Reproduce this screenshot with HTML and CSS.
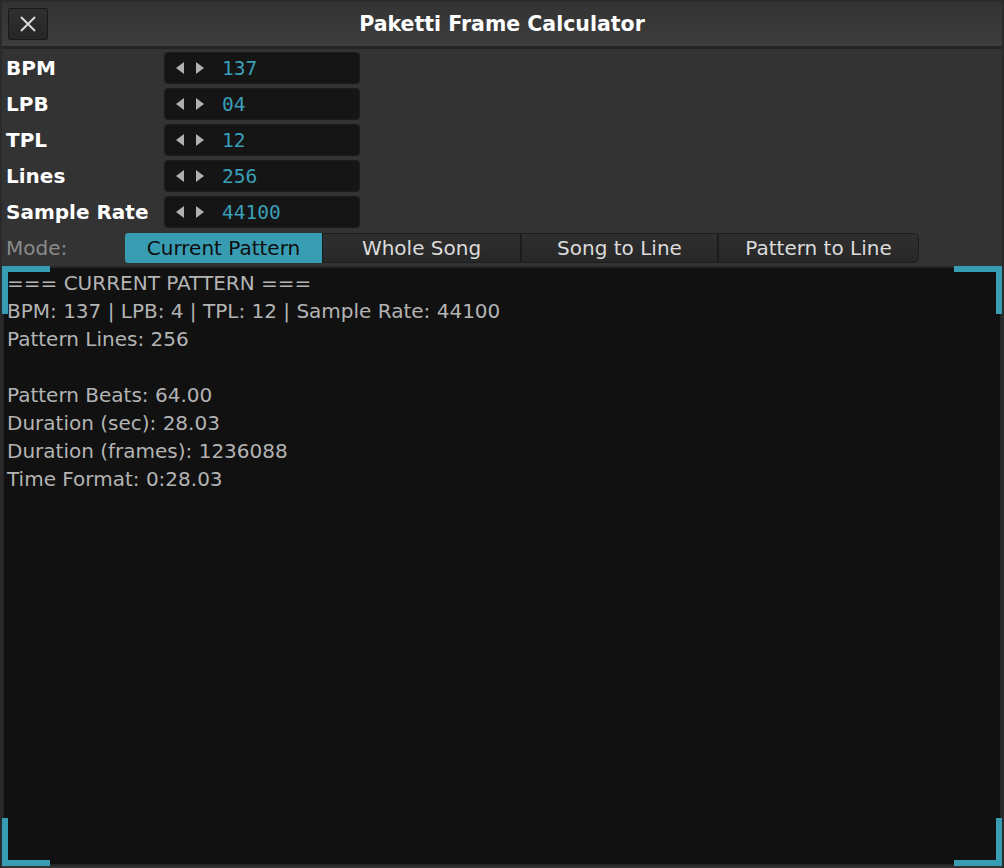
FILE: index.html
```html
<!DOCTYPE html>
<html>
<head>
<meta charset="utf-8">
<link rel="stylesheet" href="styles.css">
</head>
<body>
<div class="window">
  <div class="titlebar">
    <button class="close" aria-label="Close">
      <svg width="18" height="18" viewBox="0 0 18 18"><path d="M2 2 L16 16 M16 2 L2 16" stroke="#d8d8d8" stroke-width="2" fill="none"/></svg>
    </button>
    <div class="title">Paketti Frame Calculator</div>
    <div></div>
  </div>
  <div class="body">
    <div class="fields">
      <div class="row"><div class="label">BPM</div><div class="box"><span class="arrows"><i class="al"></i><i class="ar"></i></span><span class="val">137</span></div></div>
      <div class="row"><div class="label">LPB</div><div class="box"><span class="arrows"><i class="al"></i><i class="ar"></i></span><span class="val">04</span></div></div>
      <div class="row"><div class="label">TPL</div><div class="box"><span class="arrows"><i class="al"></i><i class="ar"></i></span><span class="val">12</span></div></div>
      <div class="row"><div class="label">Lines</div><div class="box"><span class="arrows"><i class="al"></i><i class="ar"></i></span><span class="val">256</span></div></div>
      <div class="row"><div class="label">Sample Rate</div><div class="box"><span class="arrows"><i class="al"></i><i class="ar"></i></span><span class="val">44100</span></div></div>
    </div>
    <div class="mode">
      <div class="mode-label">Mode:</div>
      <div class="seg">
        <div class="btn active">Current Pattern</div>
        <div class="btn b2">Whole Song</div>
        <div class="btn">Song to Line</div>
        <div class="btn last">Pattern to Line</div>
      </div>
    </div>
    <div class="output">
      <span class="corner tl"></span><span class="corner tr"></span><span class="corner bl"></span><span class="corner br"></span>
      <div class="line">=== CURRENT PATTERN ===</div>
      <div class="line">BPM: 137 | LPB: 4 | TPL: 12 | Sample Rate: 44100</div>
      <div class="line">Pattern Lines: 256</div>
      <div class="line">&nbsp;</div>
      <div class="line">Pattern Beats: 64.00</div>
      <div class="line">Duration (sec): 28.03</div>
      <div class="line">Duration (frames): 1236088</div>
      <div class="line">Time Format: 0:28.03</div>
    </div>
  </div>
</div>
</body>
</html>
```
FILE: styles.css
```css
html, body {
  margin: 0;
  padding: 0;
  background: #2a2a2a;
}
body {
  width: 1004px;
  height: 868px;
  overflow: hidden;
  font-family: "DejaVu Sans", "Liberation Sans", sans-serif;
}
.window {
  display: flex;
  flex-direction: column;
  height: 868px;
  padding: 2px 2px 0 2px;
  box-sizing: border-box;
}
.titlebar {
  display: grid;
  grid-template-columns: 1fr auto 1fr;
  align-items: center;
  height: 44px;
  background: linear-gradient(#333333, #3d3d3d);
  border-bottom: 3px solid #242424;
  padding: 0 6px;
}
.close {
  width: 40px;
  height: 32px;
  margin: 0;
  padding: 0;
  border: 1px solid #181818;
  border-radius: 2px;
  background: linear-gradient(#2f2f2f, #262626);
  display: flex;
  align-items: center;
  justify-content: center;
}
.title {
  color: #ffffff;
  font-weight: bold;
  font-size: 20.5px;
}
.body {
  flex: 1;
  display: flex;
  flex-direction: column;
  background: #333333;
  padding-top: 3px;
}
.fields {
  display: flex;
  flex-direction: column;
  gap: 4px;
}
.row {
  display: flex;
  align-items: center;
  height: 32px;
}
.label {
  width: 162px;
  padding-left: 4px;
  box-sizing: border-box;
  color: #ffffff;
  font-weight: bold;
  font-size: 20px;
}
.box {
  width: 196px;
  height: 32px;
  box-sizing: border-box;
  background: #151515;
  border: 1px solid #1d1d1d;
  border-radius: 4px;
  display: flex;
  align-items: center;
  padding-left: 11px;
}
.arrows {
  display: flex;
  gap: 12px;
  width: 46px;
}
.al, .ar {
  display: block;
  width: 0;
  height: 0;
  border-top: 6px solid transparent;
  border-bottom: 6px solid transparent;
}
.al { border-right: 8px solid #b0b0b0; }
.ar { border-left: 8px solid #b0b0b0; }
.val {
  font-family: "DejaVu Sans Mono", "Liberation Mono", monospace;
  font-size: 19.5px;
  color: #3a9fb8;
}
.mode {
  display: flex;
  align-items: center;
  height: 30px;
  margin-top: 5px;
}
.mode-label {
  width: 123px;
  padding-left: 4px;
  box-sizing: border-box;
  color: #8a8a8a;
  font-size: 20px;
}
.seg {
  display: flex;
  height: 30px;
}
.btn {
  width: 197px;
  height: 30px;
  box-sizing: border-box;
  border: 1px solid #1c1c1c;
  background: linear-gradient(#2f2f2f, #272727);
  color: #dcdcdc;
  font-size: 20px;
  display: flex;
  align-items: center;
  justify-content: center;
}
.btn.b2 { width: 199px; }
.btn.active {
  background: #389db3;
  color: #0e0e0e;
  border-color: #389db3;
  border-radius: 3px 0 0 3px;
}
.btn.last {
  width: 201px;
  border-radius: 0 5px 5px 0;
}
.output {
  position: relative;
  flex: 1;
  margin: 3px 0 2px 0;
  background: #111111;
  border: 2px solid #262626;
  padding: 1px 3px;
}
.line {
  color: #b4b4b4;
  font-size: 20px;
  line-height: 28px;
  white-space: pre;
}
.corner {
  position: absolute;
  width: 48px;
  height: 48px;
  box-sizing: border-box;
  border-color: #389db3;
  border-style: solid;
  border-width: 0;
}
.corner.tl { left: -2px; top: -2px; border-top-width: 6px; border-left-width: 6px; }
.corner.tr { right: -2px; top: -2px; border-top-width: 6px; border-right-width: 6px; }
.corner.bl { left: -2px; bottom: -2px; border-bottom-width: 6px; border-left-width: 6px; }
.corner.br { right: -2px; bottom: -2px; border-bottom-width: 6px; border-right-width: 6px; }
```
